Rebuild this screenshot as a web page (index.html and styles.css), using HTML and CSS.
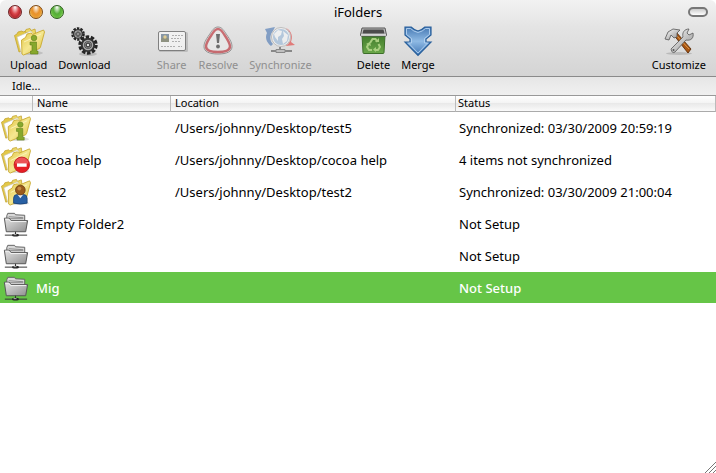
FILE: index.html
```
<!DOCTYPE html>
<html lang="en">
<head>
  <meta charset="utf-8">
  <title>iFolders</title>
  <link rel="stylesheet" href="styles.css">
</head>
<body>
  <!-- Shared icons -->
  <svg class="defs" width="0" height="0">
    <defs>
      <linearGradient id="yellow" x1="0" y1="0" x2="1" y2="1">
        <stop offset="0" stop-color="#e2c545"/>
        <stop offset=".5" stop-color="#f5e790"/>
        <stop offset="1" stop-color="#d9bb35"/>
      </linearGradient>
      <linearGradient id="grey" x1="0" y1="0" x2="1" y2="1">
        <stop offset="0" stop-color="#e4e4e4"/>
        <stop offset="1" stop-color="#8f8f8f"/>
      </linearGradient>
      <linearGradient id="steel" x1="0" y1="0" x2="1" y2="1">
        <stop offset="0" stop-color="#ffffff"/>
        <stop offset="1" stop-color="#8c8c8c"/>
      </linearGradient>
      <linearGradient id="blue" x1="0" y1="0" x2="0" y2="1">
        <stop offset="0" stop-color="#4679b4"/>
        <stop offset=".5" stop-color="#8fbae4"/>
        <stop offset="1" stop-color="#3f75b4"/>
      </linearGradient>
      <linearGradient id="green" x1="0" y1="0" x2="0" y2="1">
        <stop offset="0" stop-color="#3f7a2a"/>
        <stop offset="1" stop-color="#6ca84a"/>
      </linearGradient>
      <symbol id="folders" viewBox="0 0 32 32">
        <ellipse cx="19" cy="28" rx="11" ry="2" fill="#000" opacity=".12"/>
        <path d="M1.500 10.500L4 9l1-2 4-1 1 1 6-2 1 3-8 18-3 1z" fill="#e3c848" stroke="#c4a431" stroke-width=".8"/>
        <path d="M12 7l1-2.500 4-1 1 2 4-1.500 1 7z" fill="#ecd768" stroke="#c4a431" stroke-width=".8"/>
        <path d="M4 12L18 6l4 8-12 14-2-1z" fill="#fff" stroke="#c9c6b4" stroke-width=".7"/>
        <path d="M8.500 15L12.500 12.500l1.500-3.500 4-1 1.500 1.500 11-4.500 1 2-4 15-1 1.500-16 6.500-1.500-1z" fill="url(#yellow)" stroke="#c9a92f" stroke-width=".9"/>
        <path d="M11 17l17-8" stroke="#faf3b8" stroke-width="1" fill="none"/>
      </symbol>
      <symbol id="info" viewBox="0 0 32 32">
        <g fill="#87a82d" stroke="#5f7e19" stroke-width=".6">
          <circle cx="21" cy="13" r="2.800"/>
          <path d="M17 17h6.500v9h1.500v3h-7.500v-3h1.500v-6h-2z"/>
        </g>
      </symbol>
      <symbol id="network-folder" viewBox="0 0 32 32">
        <path d="M7 8l1-2.500h7l1 1.500 9.500.500v7H7z" fill="#d9d9d9" stroke="#626262"/>
        <path d="M9 9l15 1M9 11h15" stroke="#8a8a8a" fill="none"/>
        <path d="M4.500 10.500h5l2 2.500h17l-2 11.500h-20z" fill="url(#grey)" stroke="#555"/>
        <path d="M5.500 11.500h3.500l2 2.500h16" stroke="#f4f4f4" fill="none"/>
        <path d="M16 24.500v3M5 28h23" stroke="#333"/>
        <ellipse cx="16" cy="28" rx="3.500" ry="1.500" fill="#222"/>
        <path d="M14 27.500h3" stroke="#bbb"/>
      </symbol>
      <symbol id="gear" viewBox="-10 -10 20 20">
        <circle r="8" fill="none" stroke="#252525" stroke-width="3.400" stroke-dasharray="3.400 1.627"/>
        <circle r="5.200" fill="#858585" stroke="#333" stroke-width="4"/>
        <circle r="4.500" fill="none" stroke="#aaa" stroke-width="1.500"/>
        <circle r="1.900" fill="#e0e0e0" stroke="#222"/>
      </symbol>
    </defs>
  </svg>

  <div class="window">
    <header class="chrome">
      <div class="titlebar">
        <div class="lights">
          <button class="light close" aria-label="Close"></button>
          <button class="light minimize" aria-label="Minimize"></button>
          <button class="light zoom" aria-label="Zoom"></button>
        </div>
        <h1>iFolders</h1>
        <button class="pill" aria-label="Toggle toolbar"></button>
      </div>

      <div class="toolbar">
        <div class="group">
          <button class="tool">
            <svg viewBox="0 0 32 32"><use href="#folders"/><use href="#info"/></svg>
            <span>Upload</span>
          </button>
          <button class="tool">
            <svg viewBox="0 0 32 32">
              <ellipse cx="20" cy="29" rx="9" ry="2" fill="#000" opacity=".15"/>
              <use href="#gear" x="3" y="2" width="14" height="14"/>
              <use href="#gear" x="10" y="10" width="20" height="20"/>
            </svg>
            <span>Download</span>
          </button>
        </div>
        <div class="group">
          <button class="tool" disabled>
            <svg viewBox="0 0 32 32">
              <rect x="3" y="7" width="29" height="20" rx="1.500" fill="#555" opacity=".4"/>
              <rect x="2.500" y="6.500" width="27" height="19" rx="1.500" fill="#fff" stroke="#333"/>
              <rect x="5" y="9" width="8" height="8" fill="#405c78"/>
              <path d="M5 17v-3l4-3 4 3v3z" fill="#4c5436"/>
              <circle cx="9" cy="12" r="1.700" fill="#e0bd55"/>
              <path d="M16 10.500h11M15 13.500h10M16 16.500h9M5 21.500h14M22 21.500h4" stroke="#888" stroke-dasharray="2 1" fill="none"/>
            </svg>
            <span>Share</span>
          </button>
          <button class="tool" disabled>
            <svg viewBox="0 0 32 32">
              <path d="M16 2c3 0 5 2 7.500 6 3.500 5 6.500 9 6.500 13.500 0 5-5 7.500-14 7.500s-14-2.500-14-7.500c0-4.500 3-8.500 6.500-13.500 2.500-4 4.500-6 7.500-6z" fill="#eee" stroke="#555"/>
              <path d="M16 4c3 0 4.500 2.500 6.500 6 3.500 5 5.500 8 5.500 11.500 0 4-5 5.500-12 5.500S4 25.500 4 21.500C4 18 6 15 9.500 10c2-3.500 3.500-6 6.500-6z" fill="none" stroke="#b50f18" stroke-width="2.500"/>
              <path d="M14 9h4l-1 9h-2z" fill="#111"/>
              <circle cx="16" cy="21.500" r="1.900" fill="#111"/>
            </svg>
            <span>Resolve</span>
          </button>
          <button class="tool" disabled>
            <svg viewBox="0 0 32 32">
              <path d="M1 4l10-2-2 4c-4 5-3 10 0 13l-2 2C2 17 1 12 3 8z" fill="#3568ad"/>
              <path d="M22 3c6 3 7 9 5 14l4 3-9 1 1-3c3-5 3-10-1-15z" fill="#e32b28"/>
              <circle cx="17" cy="12" r="9" fill="#8fb3d8" stroke="#f8f8f8" stroke-width="2"/>
              <circle cx="17" cy="12" r="9.500" fill="none" stroke="#777" stroke-width=".7"/>
              <path d="M10 9l4-4 4 1-1 4-3 2v4l-3-4zM19 6l5 4-1 6-4 3-1-5 2-3z" fill="#f7fafc"/>
              <path d="M16 22v3M7 26h21" stroke="#444" stroke-width="2"/>
              <path d="M12 24.500h9v3h-9z" fill="#aaa" stroke="#444"/>
            </svg>
            <span>Synchronize</span>
          </button>
        </div>
        <div class="group">
          <button class="tool">
            <svg viewBox="0 0 32 32">
              <path d="M5 10h23l-1 17.500q0 1-1 1H7q-1 0-1-1z" fill="url(#green)" stroke="#3c6e29"/>
              <path d="M5 3h23l1.500 7q0 1-1 1H4.500q-1 0-1-1z" fill="#bdbdbd" stroke="#555"/>
              <path d="M6.500 4.500h20l1 4H5.500z" fill="#4b4b4b"/>
              <path d="M4 10h25" stroke="#dedede" stroke-width="1.500"/>
              <path d="M13 18l2.500-4h3l2 3M21.500 19l1.500 3-2 3h-3M15 25h-3l-2-3 1.500-3" fill="none" stroke="#a9cf80" stroke-width="2"/>
              <path d="M18 17h4v-4zM19 22v5l-3-2.500zM9 19l4-2 1 4z" fill="#a9cf80"/>
            </svg>
            <span>Delete</span>
          </button>
          <button class="tool">
            <svg viewBox="0 0 32 32">
              <path d="M3 2h6q3 3 7 4 4-1 7-4h6v8l-5 4v3h5L16 30.500 3 17h5v-3l-5-4z" fill="url(#blue)" stroke="#285f9b" stroke-width="1.200"/>
              <path d="M4.500 3.500h4q3 3 7.500 4 4.500-1 7.500-4h4v6l-5 4V18h3L16 28 6.500 18h3v-4.500l-5-4z" fill="none" stroke="#b4d2f0" stroke-width=".9"/>
            </svg>
            <span>Merge</span>
          </button>
        </div>
        <div class="group last">
          <button class="tool">
            <svg viewBox="0 0 32 32">
              <ellipse cx="16" cy="28.500" rx="13" ry="1.500" fill="#000" opacity=".15"/>
              <path d="M10 9l3-2 15 17-3 4z" fill="#a95612" stroke="#5c2c09" stroke-width=".9"/>
              <path d="M13 10l13 14" stroke="#df9a4d"/>
              <path d="M2 14l3-7 5-3 7 1-3 3v4l-3 1-3-3-2 5z" fill="url(#steel)" stroke="#555" stroke-width=".8"/>
              <path d="M8 24L20 12c-1-4 1-8 6-8l-2 4 2 2 4-2c1 5-2 8-7 7L12 27q-3 2-4-3z" fill="url(#steel)" stroke="#555" stroke-width=".8"/>
              <circle cx="10.500" cy="25" r="1" fill="#555"/>
            </svg>
            <span>Customize</span>
          </button>
        </div>
      </div>
    </header>

    <div class="status-line">Idle...</div>

    <main class="list">
      <table>
        <colgroup>
          <col class="col-icon">
          <col class="col-name">
          <col class="col-location">
          <col>
        </colgroup>
        <thead>
          <tr><th></th><th>Name</th><th>Location</th><th>Status</th></tr>
        </thead>
        <tbody>
          <tr>
            <td><svg viewBox="0 0 32 32"><use href="#folders"/><use href="#info"/></svg></td>
            <td>test5</td>
            <td>/Users/johnny/Desktop/test5</td>
            <td>Synchronized: 03/30/2009 20:59:19</td>
          </tr>
          <tr>
            <td>
              <svg viewBox="0 0 32 32">
                <use href="#folders"/>
                <circle cx="22.500" cy="21.500" r="8" fill="#e51e25" stroke="#b9151b" stroke-width=".8"/>
                <path d="M15.500 20a7 6 0 0 1 14 0z" fill="#f4888a" opacity=".5"/>
                <rect x="17.500" y="20" width="10" height="3.500" fill="#fff"/>
              </svg>
            </td>
            <td>cocoa help</td>
            <td>/Users/johnny/Desktop/cocoa help</td>
            <td>4 items not synchronized</td>
          </tr>
          <tr>
            <td>
              <svg viewBox="0 0 32 32">
                <use href="#folders"/>
                <path d="M14 28v-5q0-4 4-4h6q4 0 4 4v5q-7 2-14 0z" fill="#2860a3" stroke="#173f73" stroke-width=".8"/>
                <path d="M18 19l3 4 3-4z" fill="#eee"/>
                <circle cx="21" cy="14.500" r="5" fill="#9a5b1c" stroke="#67390e" stroke-width=".8"/>
                <circle cx="20" cy="13" r="2" fill="#c68a45"/>
              </svg>
            </td>
            <td>test2</td>
            <td>/Users/johnny/Desktop/test2</td>
            <td>Synchronized: 03/30/2009 21:00:04</td>
          </tr>
          <tr>
            <td><svg viewBox="0 0 32 32"><use href="#network-folder"/></svg></td>
            <td>Empty Folder2</td>
            <td></td>
            <td>Not Setup</td>
          </tr>
          <tr>
            <td><svg viewBox="0 0 32 32"><use href="#network-folder"/></svg></td>
            <td>empty</td>
            <td></td>
            <td>Not Setup</td>
          </tr>
          <tr class="selected">
            <td><svg viewBox="0 0 32 32"><use href="#network-folder"/></svg></td>
            <td>Mig</td>
            <td></td>
            <td>Not Setup</td>
          </tr>
        </tbody>
      </table>
    </main>

    <svg class="grip" viewBox="0 0 12 12">
      <path d="M1 12L12 1M5 12l7-7M9 12l3-3" stroke="#777" fill="none"/>
    </svg>
  </div>
</body>
</html>
```

FILE: styles.css
```
* {
  box-sizing: border-box;
}

body {
  margin: 0;
  background: #fff;
  color: #000;
  font-family: "Noto Sans", sans-serif;
  font-size: 13px;
}

button {
  font: inherit;
  color: inherit;
  border: none;
  background: none;
  padding: 0;
}

.defs {
  position: absolute;
}

.window {
  min-height: 100vh;
  display: flex;
  flex-direction: column;
  overflow: hidden;
}

/* Title bar and toolbar */
.chrome {
  background: linear-gradient(#f2f2f2, #e4e4e4 35%, #d4d4d4);
  border-bottom: 1px solid #8a8a8a;
  border-radius: 6px 6px 0 0;
}

.titlebar {
  display: grid;
  grid-template-columns: 1fr auto 1fr;
  align-items: center;
  height: 23px;
  padding: 0 8px;
}

.titlebar h1 {
  margin: 0;
  font-size: 13px;
  font-weight: 400;
}

.lights {
  display: flex;
  gap: 7px;
}

.light {
  width: 14px;
  height: 14px;
  border: 1px solid #555;
  border-radius: 50%;
}

.close {
  background: radial-gradient(ellipse at 50% 10%, #fff, #d9454a 45%, #b8292f 65%, #ffb0a8);
  border-color: #6d2426;
}

.minimize {
  background: radial-gradient(ellipse at 50% 10%, #fff, #e8912c 45%, #e89a31 65%, #fff59a);
  border-color: #7d4a16;
}

.zoom {
  background: radial-gradient(ellipse at 50% 10%, #fff, #55ad38 45%, #61ba3d 65%, #ccff9a);
  border-color: #2c5c1c;
}

.pill {
  justify-self: end;
  width: 20px;
  height: 10px;
  border: 2px solid #777;
  border-radius: 5px;
  background: linear-gradient(#ccc, #fff);
}

.toolbar {
  display: flex;
  gap: 45px;
  height: 53px;
  padding: 2px 10px 0;
}

.group {
  display: flex;
  gap: 11px;
}

.group.last {
  margin-left: auto;
}

.tool {
  display: flex;
  flex-direction: column;
  align-items: center;
  font-size: 11px;
  line-height: 16px;
}

.tool svg {
  width: 32px;
  height: 32px;
}

.tool:disabled {
  color: #8f8f8f;
}

.tool:disabled svg {
  opacity: 0.55;
}

.status-line {
  height: 19px;
  padding-left: 12px;
  font-size: 11px;
  line-height: 18px;
  background: linear-gradient(#e6e6e6, #f0f0f0);
  border-bottom: 1px solid #999;
}

/* File list */
.list {
  flex: 1;
}

table {
  width: 100%;
  table-layout: fixed;
  border-collapse: separate;
  border-spacing: 0;
}

.col-icon {
  width: 33px;
}

.col-name {
  width: 138px;
}

.col-location {
  width: 285px;
}

th {
  height: 16px;
  padding: 0 4px 1px;
  font-size: 11px;
  font-weight: 400;
  line-height: 14px;
  text-align: left;
  background: linear-gradient(#fff, #f4f4f4 45%, #e9e9e9 50%, #fafafa);
  border-right: 1px solid #bbb;
  border-bottom: 1px solid #aaa;
}

th:last-child {
  padding-left: 2px;
}

td {
  height: 32px;
  padding: 1px 3px 0;
  white-space: nowrap;
  border-bottom: 1px solid #fff;
}

td:first-child {
  padding: 0;
}

td:nth-child(3) {
  padding-left: 4px;
}

td svg {
  display: block;
  width: 31px;
  height: 31px;
}

.selected td {
  background: #66c547;
  color: #fff;
  font-weight: 500;
}

/* Resize corner */
.grip {
  align-self: flex-end;
  width: 12px;
  height: 12px;
}
```
